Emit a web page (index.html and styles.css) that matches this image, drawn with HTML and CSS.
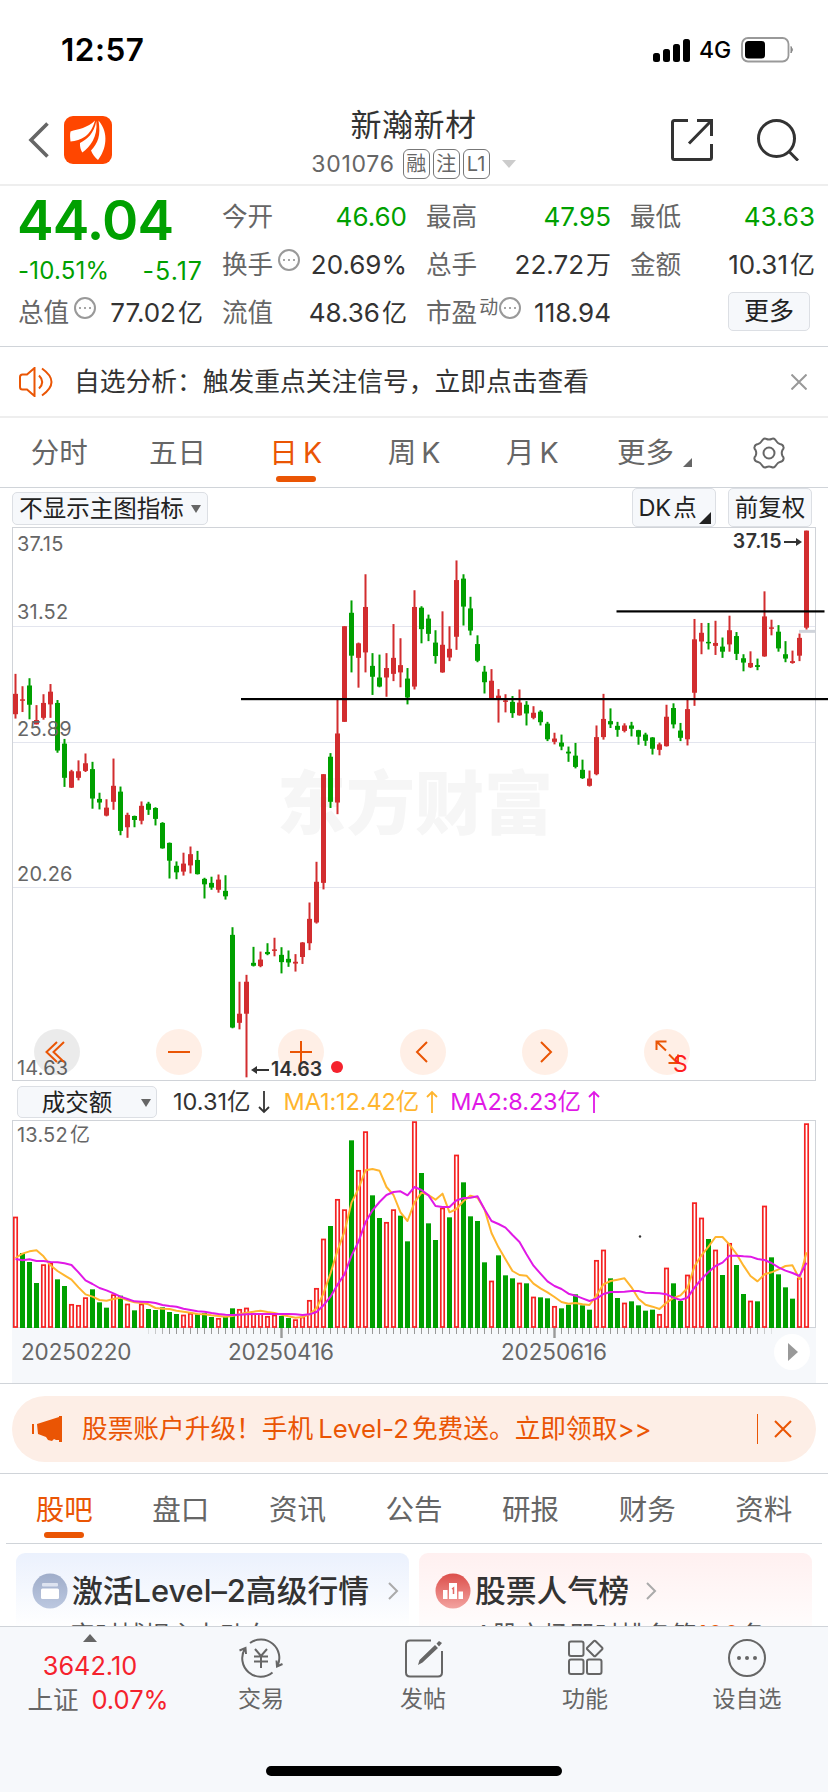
FILE: index.html
```html
<!DOCTYPE html>
<html lang="zh-CN">
<head>
    <meta charset="UTF-8">
    <meta name="viewport" content="width=device-width, initial-scale=1.0">
    <title>新瀚新材 301076</title>
    <link rel="stylesheet" href="styles.css">
</head>
<body>
    <div class="status-bar">
        <span class="time">12:57</span>
        <div class="status-right">
            <svg width="38" height="24" viewBox="0 0 38 24"><rect x="0" y="15" width="7" height="9" rx="2.5"/><rect x="10" y="11" width="7" height="13" rx="2.5"/><rect x="20" y="6" width="7" height="18" rx="2.5"/><rect x="30" y="1" width="7" height="23" rx="2.5"/></svg>
            <span class="network">4G</span>
            <svg width="54" height="26" viewBox="0 0 54 26"><rect x="1" y="1" width="46.500" height="23.500" rx="6" fill="none" stroke="#999" stroke-width="1.800"/><rect x="4" y="4" width="20" height="17.500" rx="3.500"/><path d="M50 9.500q3 3.200 0 6.500z" fill="#888" stroke="#888"/></svg>
        </div>
    </div>

    <header class="header">
        <div class="header-left">
            <svg class="back" width="22" height="36" viewBox="0 0 22 36"><path d="M19.500 1.500L3 18l16.500 16.500" fill="none" stroke="#666" stroke-width="3.600"/></svg>
            <svg width="48" height="48" viewBox="0 0 48 48"><rect width="48" height="48" rx="9" fill="#ff4600"/><path d="M31 4.500C24 12 14 13 6.500 15.500c-.7 3-.4 6 0 10C17 24.500 27 20 31 4.500z" fill="#fff"/><path d="M32.300 5C30 18 23 23 16 27c-.3 4 .8 7 2.300 9.500C26 31 34 21 32.300 5z" fill="#fff"/><path d="M34.500 4.500C37 20 34 27 27 34.500c1.500 4 4 7 7 9.500C42 34 45.500 17 34.500 4.500z" fill="#fff"/></svg>
        </div>
        <div class="title">
            <h1>新瀚新材</h1>
            <div class="code">
                <span class="number">301076</span>
                <span class="tag">融</span>
                <span class="tag">注</span>
                <span class="tag">L1</span>
                <span class="caret"></span>
            </div>
        </div>
        <div class="header-right">
            <svg width="42" height="42" viewBox="0 0 42 42" fill="none" stroke="#333" stroke-width="3"><path d="M17 1.500H3.500q-2 0-2 2v35q0 2 2 2h35q2 0 2-2V25M26 1.500h14.500V17M40 2L18 24.500"/></svg>
            <svg width="42" height="42" viewBox="0 0 42 42" fill="none" stroke="#333" stroke-width="3"><circle cx="19.500" cy="19.500" r="18"/><path d="M32 32.500l9 9"/></svg>
        </div>
    </header>

    <section class="quote">
        <div class="price">44.04</div>
        <div class="cell"><label>今开</label><b class="down">46.60</b></div>
        <div class="cell"><label>最高</label><b class="down">47.95</b></div>
        <div class="cell"><label>最低</label><b class="down">43.63</b></div>
        <div class="cell change"><span>-10.51%</span><span class="diff">-5.17</span></div>
        <div class="cell"><label>换手</label><i class="more-dot"></i><b>20.69%</b></div>
        <div class="cell"><label>总手</label><b>22.72<u>万</u></b></div>
        <div class="cell"><label>金额</label><b>10.31<u>亿</u></b></div>
        <div class="cell"><label>总值</label><i class="more-dot"></i><b>77.02<u>亿</u></b></div>
        <div class="cell"><label>流值</label><b>48.36<u>亿</u></b></div>
        <div class="cell"><label>市盈<sup>动</sup></label><i class="more-dot tight"></i><b>118.94</b></div>
        <div class="cell"><button class="btn-more">更多</button></div>
    </section>

    <div class="notice">
        <svg width="34" height="30" viewBox="0 0 34 30" fill="none" stroke="#ea5504" stroke-width="2"><path d="M15.500 1L8 7.500H3.500Q1 7.500 1 10v10q0 2.500 2.500 2.500H8l7.500 6.500zM20 8.500q6.500 6.500 0 13M23 1.500q19 13.500 0 27"/></svg>
        <span>自选分析：触发重点关注信号，立即点击查看</span>
        <svg width="16" height="16" viewBox="0 0 16 16" fill="none" stroke="#999" stroke-width="2"><path d="M.5.500l15 15M15.500.500l-15 15"/></svg>
    </div>

    <nav class="tabs period">
        <a>分时</a>
        <a>五日</a>
        <a class="active">日<em>K</em></a>
        <a>周<em>K</em></a>
        <a>月<em>K</em></a>
        <a class="with-corner">更多<span class="corner"></span></a>
        <a><svg width="34" height="32" viewBox="0 0 34 32" fill="none" stroke="#666" stroke-width="2"><path d="M11 2.500q1.500-1.500 3.500-.5 2.500 1.200 5 0 2-1 3.500.500l2 2.500q1 1.500 3 2 3 .5 3.500 3 .5 1.500-1 3-1.500 3 0 6 1.500 1.500 1 3-.5 2.500-3.500 3-2 .5-3 2l-2 2.500q-1.500 1.500-3.500.5-2.500-1.200-5 0-2 1-3.500-.5l-2-2.500q-1-1.500-3-2-3-.5-3.500-3-.5-1.500 1-3 1.500-3 0-6-1.500-1.500-1-3 .5-2.500 3.500-3 2-.5 3-2z"/><circle cx="17" cy="16" r="5.500"/></svg></a>
    </nav>

    <div class="toolbar">
        <button class="select main-index">不显示主图指标<span class="caret dark"></span></button>
        <div class="toolbar-right">
            <button class="select tall">DK<u>点</u><span class="corner black"></span></button>
            <button class="select tall">前复权</button>
        </div>
    </div>

    <div class="chart" id="chart">
        <div class="watermark">东方财富</div>
        <svg id="kline" width="816" height="554"></svg>
        <span class="scale s1">37.15</span>
        <span class="scale s2">31.52</span>
        <span class="scale s3">25.89</span>
        <span class="scale s4">20.26</span>
        <span class="scale s5">14.63</span>
        <div class="controls">
            <span class="gray"><svg viewBox="0 0 46 46"><path d="M23 13L12.500 23 23 33M30 13L19.500 23 30 33"/></svg></span>
            <span><svg viewBox="0 0 46 46"><path d="M12 23h22"/></svg></span>
            <span><svg viewBox="0 0 46 46"><path d="M12 23h22M23 12v22"/></svg></span>
            <span><svg viewBox="0 0 46 46"><path d="M27 13L17 23l10 10"/></svg></span>
            <span><svg viewBox="0 0 46 46"><path d="M19 13l10 10-10 10"/></svg></span>
            <span><svg viewBox="0 0 46 46"><path d="M12.500 21v-8.500h10M13 13l9 8.500M24.500 34h9.500v-8.500M25 25.500l8.500 8.500"/></svg></span>
        </div>
        <span class="mark low"><svg width="18" height="10" viewBox="0 0 18 10"><path d="M3 5h15" stroke="#333" stroke-width="2"/><path d="M0 5l6-4v8z" fill="#333"/></svg>14.63</span>
        <span class="mark high">37.15<svg width="18" height="10" viewBox="0 0 18 10"><path d="M0 5h15" stroke="#333" stroke-width="2"/><path d="M18 5l-6-4v8z" fill="#333"/></svg></span>
        <span class="red-dot"></span>
        <span class="sell">S</span>
    </div>

    <div class="volume-info">
        <button class="select volume-index">成交额<span class="caret dark"></span></button>
        <span class="info-total">10.31亿<svg width="12" height="24" viewBox="0 0 12 24"><path d="M6 1v21M1 17l5 5 5-5"/></svg></span>
        <span class="info-ma1">MA1:12.42亿<svg width="12" height="24" viewBox="0 0 12 24"><path d="M6 23V2M1 7l5-5 5 5"/></svg></span>
        <span class="info-ma2">MA2:8.23亿<svg width="12" height="24" viewBox="0 0 12 24"><path d="M6 23V2M1 7l5-5 5 5"/></svg></span>
    </div>
    <div class="volume">
        <svg id="volume" width="802" height="207"></svg>
        <span class="scale v1">13.52<u>亿</u></span>
    </div>
    <div class="axis">
        <svg id="ticks" width="804" height="12"></svg>
        <div class="dates">
            <span>20250220</span>
            <span>20250416</span>
            <span>20250616</span>
            <button class="play"><svg width="10" height="18" viewBox="0 0 10 18"><path d="M0 0l10 9-10 9z" fill="#999"/></svg></button>
        </div>
    </div>

    <div class="banner-wrap">
        <div class="banner">
            <svg width="30" height="26" viewBox="0 0 30 26" fill="#ea5504"><path d="M0 8h2v10H0zM5 8L27 1V0h3v26h-3v-2h-3l-2-1-2 2-4-1-2-3-8-3z"/></svg>
            <span class="banner-text">股票账户升级！手机<em>Level-2</em>免费送。立即领取&gt;&gt;</span>
            <span class="divider"></span>
            <svg width="18" height="18" viewBox="0 0 18 18" fill="none" stroke="#ea5504" stroke-width="2"><path d="M1 1l16 16M17 1L1 17"/></svg>
        </div>
    </div>

    <nav class="tabs sections">
        <a class="active">股吧</a>
        <a>盘口</a>
        <a>资讯</a>
        <a>公告</a>
        <a>研报</a>
        <a>财务</a>
        <a>资料</a>
    </nav>

    <div class="cards">
        <div class="card blue">
            <h2>
                <svg width="36" height="36" viewBox="0 0 36 36"><defs><linearGradient id="gb" x1="0" y1="0" x2="0" y2="1"><stop offset="0" stop-color="#9fadca"/><stop offset="1" stop-color="#bcc8e0"/></linearGradient></defs><circle cx="18" cy="18" r="17.500" fill="url(#gb)"/><rect x="10" y="10" width="16" height="3.500" rx="1" fill="#dde3f0"/><rect x="9" y="15.500" width="18" height="10.500" rx="1.500" fill="#fff"/></svg>
                激活Level–2高级行情
                <svg class="arrow" width="12" height="18" viewBox="0 0 12 18"><path d="M2 1l8 8-8 8"/></svg>
            </h2>
            <p>实时捕捉主力动向</p>
        </div>
        <div class="card pink">
            <h2>
                <svg width="36" height="36" viewBox="0 0 36 36"><defs><linearGradient id="gr" x1="0" y1="0" x2="0" y2="1"><stop offset="0" stop-color="#dc4f4b"/><stop offset="1" stop-color="#f3a3a0"/></linearGradient></defs><circle cx="18" cy="18" r="17.500" fill="url(#gr)"/><path d="M8 17h4.500v9H8zM14 10h8v16h-8zM23.500 18.500H28V26h-4.500z" fill="#fff"/><path d="M17 16l1.500-1v6" fill="none" stroke="#e26a66" stroke-width="1.500"/></svg>
                股票人气榜
                <svg class="arrow wide" width="12" height="18" viewBox="0 0 12 18"><path d="M2 1l8 8-8 8"/></svg>
            </h2>
            <p>A股市场即时排名第<strong>100</strong>名</p>
        </div>
    </div>

    <footer class="bottom-bar">
        <div class="index">
            <span class="up-caret"></span>
            <div class="index-value">3642.10</div>
            <div class="index-name">上证<span>0.07%</span></div>
        </div>
        <div class="item">
            <svg width="44" height="40" viewBox="0 0 44 40" fill="none" stroke="#666" stroke-width="2"><path d="M11 5A18.500 18.500 0 0 1 38.500 28M33.500 34.500A18.500 18.500 0 0 1 6 10.500M.5 12.500l6-2.500.5 6M37.500 22.500l.5 6 5.500-2.500M16 11l6 7 6-7M15 18.500h14M15 23.500h14M22 18.500V30"/></svg>
            <span>交易</span>
        </div>
        <div class="item">
            <svg width="40" height="40" viewBox="0 0 40 40" fill="none" stroke="#666" stroke-width="2"><path d="M28 2.500H7q-4 0-4 4v28q0 4 4 4h28q4 0 4-4V13"/><path d="M15 27l1.500-5L32 7l3 3-15.500 14.500zM33.500 5.500L36 3l3 2-3 3.500z" fill="#666" stroke="none"/></svg>
            <span>发帖</span>
        </div>
        <div class="item">
            <svg width="40" height="40" viewBox="0 0 40 40" fill="none" stroke="#666" stroke-width="2"><rect x="4" y="3.500" width="14.500" height="14.500" rx="2"/><rect x="4" y="21.500" width="14.500" height="14.500" rx="2"/><rect x="22" y="21.500" width="14.500" height="14.500" rx="2"/><path d="M28.700 3.200q1-1 2 0l6.300 6.300q1 1 0 2l-6.300 6.300q-1 1-2 0l-6.300-6.300q-1-1 0-2z"/></svg>
            <span>功能</span>
        </div>
        <div class="item">
            <svg width="40" height="40" viewBox="0 0 40 40" fill="none" stroke="#666" stroke-width="2"><circle cx="20" cy="20" r="18"/><g fill="#666" stroke="none"><circle cx="12" cy="20" r="2"/><circle cx="20" cy="20" r="2"/><circle cx="28" cy="20" r="2"/></g></svg>
            <span>设自选</span>
        </div>
        <div class="home-indicator"></div>
    </footer>

    <script src="chart.js"></script>
</body>
</html>
```
FILE: chart.js
```js
const NS = 'http://www.w3.org/2000/svg';
const STEP = 7;
const UP = '#d22d2f';
const DOWN = '#00a000';

// color, high, body top, body bottom, low
const candles = `
r424,479,535,547 r458,494,498,529 g436,456,509,549 r510,551,563,563 r480,504,545,550 r452,473,508,545
g496,504,635,641 g603,616,710,735 r688,692,737,738 r662,692,710,717 r643,670,691,694 g666,686,767,795
g751,768,778,797 r769,792,814,816 r657,732,776,798 g734,748,856,868 r806,812,846,875 g814,815,826,846
r775,787,828,838 g776,781,798,812 g791,793,823,841 g832,834,904,905 g888,889,938,987 g940,952,970,989
r916,946,968,979 r899,920,951,973 g911,936,975,976 g985,988,1003,1042 g982,999,1012,1018 r976,990,1018,1026
g978,1021,1036,1045 g1121,1142,1397,1399 r1271,1359,1384,1402 r1252,1271,1359,1534 g1175,1219,1227,1229
r1188,1210,1228,1231 g1165,1189,1195,1198 r1150,1182,1186,1201 g1176,1197,1217,1248 g1185,1208,1218,1230
r1195,1216,1221,1243 r1162,1163,1203,1222 r1053,1098,1165,1184 r941,996,1108,1111 r700,700,999,1017
g642,652,776,793 r495,588,778,810 r293,293,556,556 g222,256,374,420 r338,340,380,462 r150,240,365,420
g367,402,432,482 g371,434,459,461 r367,408,434,487 r287,380,424,444 r326,400,420,461 g408,437,489,508
r194,240,459,467 g238,242,301,340 g261,272,314,334 g304,338,375,396 r252,344,420,421 r293,355,379,389
r112,166,322,358 g150,162,239,291 g212,244,305,318 g318,342,388,392 g402,418,447,478 r411,443,492,493
r466,484,492,558 r480,497,501,530 g485,501,532,545 r467,503,538,539 g499,509,533,566 r513,531,545,549
g524,528,557,566 g556,561,604,609 r586,602,611,618 g591,613,624,634 g624,638,643,666 g614,649,680,684
g660,688,711,713 r690,712,732,734 r566,598,700,703 r479,548,598,605 g519,554,563,573 g556,567,578,597
r560,566,581,585 g556,566,575,596 g578,579,597,619 g586,591,608,622 g598,599,630,646 r613,618,633,648
r509,542,623,624 g505,518,563,574 g559,580,600,609 r495,521,604,621 r273,329,476,512 r284,311,335,370
g284,336,340,357 r278,339,347,372 g324,349,363,380 r264,304,343,363 g309,320,369,386 g370,381,393,417
r362,394,406,408 g382,400,405,414 r197,266,376,377 r275,296,300,318 g290,308,354,363 g334,370,382,392
r360,389,394,396 r313,325,374,389 r30,30,297,302`.trim().split(/\s+/);

const volumes = `
r410 g519 g546 g609 r553 r548 g598 g618 r672 r675 r652 g628 g667 g683 r643 g647 r671 g691 r671 g687
g690 g682 g696 g702 r704 r699 g703 g699 g711 r714 g711 g685 r687 r683 r699 r700 r708 r704 g708 g714
r718 r710 r660 r624 r476 g438 r357 r388 g181 r270 r154 g346 g414 r426 r388 g407 g484 r124 g279 g430
g480 r383 g412 r224 g307 g409 g423 g547 r602 g526 g586 g595 r608 g610 r650 g652 g655 r678 g685 g674
g643 g676 g689 r540 r509 g595 g654 r668 g664 g676 g692 g689 r702 r563 g610 g663 r584 r367 r413 g477
r509 g585 r489 g555 g642 r662 g664 r377 g532 g583 g622 g656 r593 r130`.trim().split(/\s+/);

const ma1 = [534,521,514,511,529,556,573,586,599,622,643,650,660,662,657,653,661,667,669,673,684,686,687,692,695,698,702,703,706,708,710,708,703,698,695,692,696,699,704,709,713,711,703,685,640,580,512,455,368,326,271,267,272,321,345,397,423,367,338,345,359,341,397,387,363,347,353,388,459,502,538,573,585,587,611,625,637,651,666,671,669,673,675,646,613,603,599,595,622,656,674,680,687,668,654,646,624,559,526,500,471,471,494,522,557,588,604,583,577,568,558,556,597,517];
const ma2 = [537,541,538,543,543,546,547,550,555,577,601,612,624,631,640,650,657,664,665,666,669,675,678,680,686,690,694,695,699,702,704,705,704,703,702,702,702,702,702,702,703,705,703,696,676,650,614,583,527,485,427,391,366,345,336,334,346,321,330,346,378,381,381,361,354,353,349,388,423,432,443,465,486,523,557,581,604,618,627,641,647,655,663,656,642,636,636,635,633,633,638,639,640,643,653,660,653,623,597,576,558,548,527,527,529,530,537,540,549,562,572,579,588,548];

function add(parent, name, attrs) {
    const el = document.createElementNS(NS, name);
    for (const key in attrs) {
        el.setAttribute(key, attrs[key]);
    }
    parent.appendChild(el);
}

function drawKline() {
    const svg = document.getElementById('kline');
    const y = v => (v - 20) / 2.751;
    [293, 611, 1010].forEach(v => {
        add(svg, 'rect', { x: 1, y: Math.round(y(v)), width: 802, height: 1, fill: '#e3e5ee' });
    });
    add(svg, 'rect', { x: 787, y: y(303), width: 16, height: 3, fill: '#d0d4db' });
    candles.forEach((c, i) => {
        const fill = c[0] === 'r' ? UP : DOWN;
        const [high, top, bottom, low] = c.slice(1).split(',').map(Number);
        const x = 3.500 + i * STEP;
        add(svg, 'rect', { x: x - 1, y: y(high), width: 2, height: y(low) - y(high), fill });
        add(svg, 'rect', { x: x - 2.500, y: y(top), width: 5, height: Math.max(y(bottom) - y(top), 1.500), fill });
    });
    // trend lines
    add(svg, 'rect', { x: 229, y: 171, width: 587, height: 2.200, fill: '#000' });
    add(svg, 'rect', { x: 604.500, y: 83.300, width: 208, height: 2.200, fill: '#000' });
}

function drawVolume() {
    const svg = document.getElementById('volume');
    const y = v => (v - 123) / 3;
    volumes.forEach((item, i) => {
        const top = y(Number(item.slice(1)));
        const x = 2.500 + i * STEP;
        if (item[0] === 'r') {
            add(svg, 'rect', { x: x - 1.700, y: top + .8, width: 3.400, height: 205.200 - top, fill: '#fff', stroke: '#f52222', 'stroke-width': 1.700 });
        } else {
            add(svg, 'rect', { x: x - 2.500, y: top, width: 5, height: 207 - top, fill: DOWN });
        }
    });
    [[ma1, '#ffb52e'], [ma2, '#e019e6']].forEach(([line, stroke]) => {
        const points = line.map((v, i) => `${2.500 + i * STEP},${y(v)}`).join(' ');
        add(svg, 'polyline', { points, fill: 'none', stroke, 'stroke-width': 2, 'stroke-linejoin': 'round' });
    });
    add(svg, 'circle', { cx: 627, cy: 115.500, r: 1.200, fill: '#333' });
}

function drawTicks() {
    const svg = document.getElementById('ticks');
    for (let i = 19; i <= 108; i++) {
        const major = i === 38 || i === 77;
        const edge = Math.min(i - 18, 109 - i);
        add(svg, 'rect', {
            x: 3.500 + i * STEP - (major ? 1.200 : .5),
            y: 0,
            width: major ? 2.400 : 1,
            height: major ? 10 : 6,
            fill: '#999',
            opacity: Math.min(1, edge / 4)
        });
    }
}

drawKline();
drawVolume();
drawTicks();
```
FILE: styles.css
```css
* {
    box-sizing: border-box;
}

body {
    margin: 0;
    width: 828px;
    height: 1792px;
    overflow: hidden;
    background-color: #fff;
    color: #333;
    font-family: Inter, "Noto Sans CJK SC", sans-serif;
    font-size: 26px;
    line-height: 1;
}

svg {
    display: block;
    flex: none;
}

button {
    font-family: inherit;
    line-height: 1;
    padding: 0;
    color: #222;
    background-color: #f6f8fb;
    border: 1.5px solid #dcdfe4;
    border-radius: 5px;
}

em, i {
    font-style: normal;
}

u {
    text-decoration: none;
    margin-left: 2px;
}

/* status bar */

.status-bar {
    display: flex;
    justify-content: space-between;
    align-items: center;
    height: 100px;
    padding: 0 33px 0 61px;
    color: #000;
}

.time {
    font-size: 31.500px;
    font-weight: 600;
    letter-spacing: 0.5px;
}

.status-right {
    display: flex;
    align-items: center;
    gap: 8px;
}

.network {
    width: 34px;
    font-size: 23px;
    font-weight: 500;
}

/* header */

.header {
    display: flex;
    justify-content: space-between;
    height: 86px;
    padding: 0 29px 0 28px;
    border-bottom: 2px solid #eee;
}

.header-left {
    display: flex;
    align-items: center;
    gap: 14px;
    width: 175px;
    height: 80px;
}

.title {
    display: flex;
    flex-direction: column;
    align-items: center;
    padding-top: 9px;
}

.title h1 {
    margin: 0 0 9px;
    font-size: 31px;
    font-weight: 400;
    letter-spacing: 0.5px;
}

.code {
    display: flex;
    align-items: center;
    gap: 3px;
    color: #666;
}

.code .number {
    font-size: 23px;
    letter-spacing: 0.7px;
    margin-right: 5px;
}

.tag {
    width: 27px;
    height: 30px;
    border: 1px solid #777;
    border-radius: 6px;
    font-size: 20px;
    line-height: 28px;
    text-align: center;
}

.caret {
    width: 0;
    height: 0;
    border: 7px solid transparent;
    border-top: 8px solid #ccc;
    border-bottom: 0;
}

.code .caret {
    margin-left: 9px;
}

.header-right {
    display: flex;
    align-items: center;
    justify-content: flex-end;
    gap: 44px;
    width: 175px;
    height: 80px;
}

/* quote */

.quote {
    display: grid;
    grid-template-columns: repeat(4, 185px);
    grid-auto-rows: 48px;
    column-gap: 19px;
    height: 161px;
    padding: 7px 12px 0 18px;
    border-bottom: 1px solid #d0d4d9;
}

.price {
    margin-left: -1px;
    color: #00a000;
    font-size: 55px;
    font-weight: 600;
    letter-spacing: -0.8px;
    line-height: 54px;
}

.cell {
    display: flex;
    align-items: center;
    min-width: 0;
    white-space: nowrap;
}

.cell label {
    color: #666;
    font-size: 25.600px;
}

.cell b {
    margin-left: auto;
    font-weight: 400;
    font-size: 26px;
}

.cell u {
    font-size: 25px;
}

.cell b.down {
    color: #00a000;
}

.cell sup {
    font-size: 19px;
    line-height: 0;
    vertical-align: 8px;
    margin-left: 2px;
}

.change {
    justify-content: space-between;
    padding-top: 12px;
    color: #00a000;
    font-size: 24px;
    letter-spacing: 0.2px;
}

.change .diff {
    font-size: 25px;
    letter-spacing: 1px;
}

.more-dot {
    display: flex;
    align-items: center;
    justify-content: center;
    width: 22px;
    height: 22px;
    margin: 0 0 11px 5px;
    border: 2px solid #999;
    border-radius: 50%;
}

.more-dot::after {
    content: '';
    width: 2px;
    height: 2px;
    border-radius: 50%;
    background-color: #888;
    box-shadow: -5px 0 #888, 5px 0 #888;
}

.more-dot.tight {
    margin-left: 1px;
}

.btn-more {
    width: 82px;
    height: 39px;
    margin: -3px 5px 0 auto;
    font-size: 25px;
}

/* notice */

.notice {
    display: flex;
    align-items: center;
    height: 71px;
    padding: 0 21px 0 19px;
    border-bottom: 2px solid #eee;
}

.notice span {
    margin: 0 auto 0 21px;
    font-size: 25.750px;
}

/* tabs */

.tabs {
    display: grid;
    grid-template-columns: repeat(7, 1fr);
    height: 70px;
    border-bottom: 1px solid #d0d4d9;
    color: #666;
    font-size: 28.500px;
}

.tabs a {
    position: relative;
    display: flex;
    align-items: center;
    justify-content: center;
    padding-top: 1px;
}

.tabs em {
    margin-left: 5px;
}

.tabs .active {
    color: #ea5504;
}

.tabs .active::after {
    content: '';
    position: absolute;
    bottom: 5px;
    width: 40px;
    height: 6px;
    border-radius: 3px;
    background-color: #ea5504;
}

.tabs .with-corner {
    padding-right: 10px;
}

.corner {
    position: absolute;
    right: 18px;
    bottom: 20px;
    border-left: 9px solid transparent;
    border-bottom: 9px solid #666;
}

/* chart toolbar */

.toolbar {
    display: flex;
    justify-content: space-between;
    align-items: center;
    height: 39px;
    padding: 0 16px 0 12px;
}

.toolbar-right {
    display: flex;
    gap: 12px;
}

.select {
    position: relative;
    display: flex;
    align-items: center;
    justify-content: center;
    height: 33px;
    padding-top: 1px;
    font-size: 23.500px;
}

.main-index {
    width: 196px;
    gap: 7px;
    margin-top: 1px;
}

.caret.dark {
    border-width: 8px 5px 0;
    border-top-color: #666;
}

.select.tall {
    width: 84px;
    height: 39px;
}

.select.tall:first-child {
    padding-right: 13px;
}

.corner.black {
    right: 4px;
    bottom: 2px;
    border-left-width: 12px;
    border-bottom: 12px solid #222;
}

/* candles */

.chart {
    position: relative;
    width: 804px;
    height: 554px;
    margin-left: 12px;
}

.chart::before {
    content: '';
    position: absolute;
    inset: 0;
    border: 1px solid #d0d3d8;
}

#kline {
    position: relative;
}

.watermark {
    position: absolute;
    left: 265px;
    top: 243px;
    font-size: 69px;
    font-weight: 900;
    color: #f6f6f6;
}

.scale {
    position: absolute;
    left: 5px;
    font-size: 20px;
    letter-spacing: 0.2px;
    color: #666;
}

.s1 { top: 7px; }
.s2 { top: 75px; }
.s3 { top: 192px; }
.s4 { top: 337px; }
.s5 { top: 531px; }

.controls {
    position: absolute;
    left: 22px;
    top: 502px;
    display: flex;
    gap: 76px;
}

.controls span {
    width: 46px;
    height: 46px;
    border-radius: 50%;
    background-color: rgba(255, 228, 214, 0.6);
}

.controls .gray {
    background-color: rgba(0, 0, 0, 0.08);
}

.controls path {
    fill: none;
    stroke: #ea5504;
    stroke-width: 2;
}

.mark {
    position: absolute;
    display: flex;
    align-items: center;
    gap: 2px;
    font-size: 19.500px;
    font-weight: 600;
}

.low {
    left: 239px;
    top: 533px;
}

.high {
    right: 14px;
    top: 5px;
    letter-spacing: 0.6px;
}

.red-dot {
    position: absolute;
    left: 319px;
    top: 534px;
    width: 12px;
    height: 12px;
    border-radius: 50%;
    background-color: #f5222d;
}

.sell {
    position: absolute;
    left: 661px;
    top: 526px;
    font-size: 23px;
    color: #ff1f1f;
}

/* volume */

.volume-info {
    display: flex;
    align-items: center;
    height: 39px;
    padding: 3px 0 0 17px;
    font-size: 23.500px;
}

.volume-info > span {
    display: flex;
    align-items: center;
    gap: 7px;
}

.volume-info path {
    fill: none;
    stroke: currentColor;
    stroke-width: 1.800;
}

.volume-index {
    width: 140px;
    height: 32px;
    margin-right: 16px;
    padding-left: 19px;
    gap: 29px;
}

.info-ma1 {
    margin-left: 14px;
    color: #ffb52e;
    letter-spacing: -0.1px;
}

.info-ma2 {
    margin-left: 12px;
    color: #e019e6;
    letter-spacing: -0.1px;
}

.volume {
    position: relative;
    width: 804px;
    height: 208px;
    margin-left: 12px;
    border: 1px solid #d0d3d8;
}

.v1 {
    left: 4px;
    top: 4px;
}

.axis {
    width: 804px;
    height: 55px;
    margin-left: 12px;
    background-color: #f6f8fb;
}

.dates {
    display: flex;
    align-items: center;
    height: 24px;
    padding: 0 6px 0 9px;
    color: #666;
    font-size: 22.500px;
    letter-spacing: -0.1px;
}

.dates span {
    width: 110px;
}

.dates span + span {
    margin-left: 97px;
}

.dates span:nth-child(3) {
    margin-left: 163px;
}

.play {
    display: flex;
    align-items: center;
    justify-content: center;
    flex: none;
    width: 36px;
    height: 36px;
    margin-left: auto;
    padding-left: 2px;
    border: 0;
    border-radius: 50%;
    background-color: #fff;
}

/* banner */

.banner-wrap {
    height: 91px;
    padding: 12px 12px 0;
    border-top: 1px solid #d0d4d9;
    border-bottom: 1px solid #d0d4d9;
}

.banner {
    display: flex;
    align-items: center;
    height: 66px;
    padding: 0 24px 0 20px;
    border-radius: 33px;
    background-color: #fdeee6;
    color: #ea5504;
    font-size: 25.700px;
}

.banner-text {
    margin: 0 auto 0 20px;
}

.banner em {
    margin: 0 3px 0 5px;
}

.divider {
    width: 1px;
    height: 30px;
    margin-right: 16px;
    background-color: #ea5504;
}

.sections {
    margin: 0 6px;
}

.sections a {
    padding-top: 4px;
}

/* cards */

.cards {
    display: flex;
    gap: 10px;
    height: 82px;
    padding: 9px 16px 0;
    overflow: hidden;
}

.card {
    width: 393px;
    height: 120px;
    padding: 20px 16px;
    border-radius: 9px;
}

.blue {
    background: linear-gradient(#ebf1fd, #fff 75px);
}

.pink {
    background: linear-gradient(#fff0f0, #fff 90px);
}

.card h2 {
    display: flex;
    align-items: center;
    gap: 4px;
    height: 36px;
    margin: 0;
    font-size: 30.800px;
    font-weight: 500;
    white-space: nowrap;
}

.card .arrow {
    margin-left: auto;
    margin-right: -6px;
}

.card .arrow.wide {
    margin-left: 12px;
}

.arrow path {
    fill: none;
    stroke: #aaa;
    stroke-width: 2;
}

.card p {
    margin: 14px 0 0 38px;
    font-size: 25px;
    color: #555;
    white-space: nowrap;
}

.pink p {
    margin-left: 40px;
    letter-spacing: 0.5px;
}

.card strong {
    color: #ea5504;
    font-weight: 400;
}

/* bottom bar */

.bottom-bar {
    position: relative;
    display: grid;
    grid-template-columns: 180px repeat(4, 162px);
    height: 166px;
    border-top: 1px solid #d0d4d9;
    background-color: #f6f8fb;
    color: #666;
    font-size: 23px;
}

.item {
    display: flex;
    flex-direction: column;
    align-items: center;
    gap: 10px;
    padding-top: 11px;
}

.index {
    display: flex;
    flex-direction: column;
    align-items: center;
    padding-top: 7px;
}

.up-caret {
    border: 7px solid transparent;
    border-bottom: 8px solid #666;
    border-top: 0;
}

.index-value {
    margin-top: 11px;
    font-size: 25.300px;
    color: #f5222d;
}

.index-name {
    margin: 9px 0 0 16px;
    font-size: 25.500px;
}

.index-name span {
    margin-left: 13px;
    color: #f5222d;
}

.index-name,
.item span {
    white-space: nowrap;
}

.home-indicator {
    position: absolute;
    left: 266px;
    bottom: 16px;
    width: 296px;
    height: 10px;
    border-radius: 5px;
    background-color: #000;
}
```
